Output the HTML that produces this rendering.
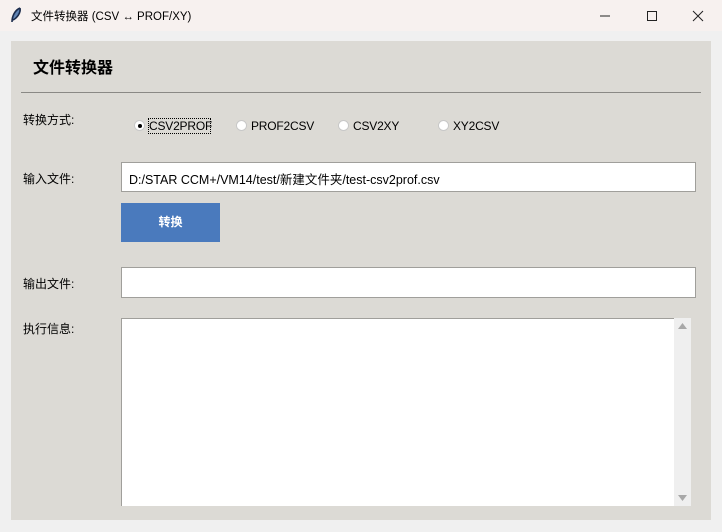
<!DOCTYPE html>
<html><head><meta charset="utf-8"><style>
*{margin:0;padding:0;box-sizing:border-box}
body{width:722px;height:532px;background:#f0f0f0;font-family:"Liberation Sans","Noto Sans CJK SC",sans-serif;font-size:12px;color:#000;position:relative;overflow:hidden}
.tb{position:absolute;left:0;top:0;width:722px;height:31px;background:#f7f1ef}
.tb .t{position:absolute;left:31px;top:8px;font-size:11.5px}
.a{position:absolute}
.frame{position:absolute;left:11px;top:41px;width:700px;height:479px;background:#dcdad5}
.in{position:absolute;background:#fff;border:1px solid #a09f9b}
.rd{position:absolute;width:11px;height:11px;border-radius:50%;background:#fff;border:1px solid #c8c8c8}
</style></head><body>
<div class="tb">
<svg class="a" style="left:10px;top:7px" width="12" height="16" viewBox="0 0 12 16"><path d="M10 1 C5 3 2 9 2 15 M10 1 C11 6 7 11 3 13" stroke="#1a2a4a" stroke-width="1.6" fill="#5a7fb0"/></svg>
<div class="t">文件转换器 (CSV ↔ PROF/XY)</div>
<svg class="a" style="left:600px;top:9px" width="110" height="14" viewBox="0 0 110 14"><path d="M0 7H10" stroke="#222"/><path d="M47.5 2.5h9v9h-9z" stroke="#222" fill="none"/><path d="M93 2l10 10M103 2l-10 10" stroke="#222"/></svg>
</div>
<div class="frame"></div>
<div class="a" style="left:33px;top:54px;font-size:16px;font-weight:bold">文件转换器</div>
<div class="a" style="left:21px;top:92px;width:680px;height:1px;background:#8a8985"></div>
<div class="a" style="left:23px;top:111px">转换方式:</div>
<div class="rd" style="left:134px;top:120px"><div style="position:absolute;left:3px;top:3px;width:4px;height:4px;border-radius:50%;background:#000"></div></div>
<div class="a" style="left:148px;top:118px;width:63px;height:16px;border:1px dotted #000"></div>
<div class="a" style="left:149px;top:119px;letter-spacing:-0.2px">CSV2PROF</div>
<div class="rd" style="left:236px;top:120px"></div><div class="a" style="left:251px;top:119px;letter-spacing:-0.2px">PROF2CSV</div>
<div class="rd" style="left:338px;top:120px"></div><div class="a" style="left:353px;top:119px;letter-spacing:-0.2px">CSV2XY</div>
<div class="rd" style="left:438px;top:120px"></div><div class="a" style="left:453px;top:119px;letter-spacing:-0.2px">XY2CSV</div>
<div class="a" style="left:23px;top:170px">输入文件:</div>
<div class="in" style="left:121px;top:162px;width:575px;height:30px"><div style="position:absolute;left:7px;top:6px;font-size:12.5px">D:/STAR CCM+/VM14/test/新建文件夹/test-csv2prof.csv</div></div>
<div class="a" style="left:121px;top:203px;width:99px;height:39px;background:#4a7abd;color:#fff;font-weight:bold;text-align:center;line-height:39px">转换</div>
<div class="a" style="left:23px;top:275px">输出文件:</div>
<div class="in" style="left:121px;top:267px;width:575px;height:31px"></div>
<div class="a" style="left:23px;top:320px">执行信息:</div>
<div class="in" style="left:121px;top:318px;width:554px;height:188px;border-right:none;border-bottom:none"></div>
<div class="a" style="left:674px;top:318px;width:17px;height:188px;background:#efefef"></div>
<svg class="a" style="left:677px;top:321px" width="11" height="182" viewBox="0 0 11 182"><path d="M1 8L5.5 2L10 8z M1 174L5.5 180L10 174z" fill="#a8a8a8"/></svg>
</body></html>
